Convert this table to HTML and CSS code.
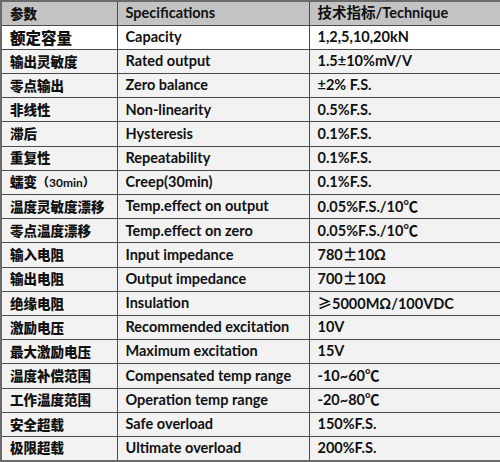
FILE: index.html
```html
<!DOCTYPE html>
<html lang="zh">
<head>
<meta charset="utf-8">
<title>参数 Specifications</title>
<link rel="stylesheet" href="styles.css">
</head>
<body>
<table class="spec">
  <colgroup><col class="c1"><col class="c2"><col class="c3"></colgroup>
  <thead>
    <tr class="head"><th>参数</th><th>Specifications</th><th>技术指标/Technique</th></tr>
  </thead>
  <tbody>
    <tr class="first"><td class="big">额定容量</td><td>Capacity</td><td>1,2,5,10,20kN</td></tr>
    <tr><td>输出灵敏度</td><td>Rated output</td><td>1.5±10%mV/V</td></tr>
    <tr><td>零点输出</td><td>Zero balance</td><td>±2% F.S.</td></tr>
    <tr><td>非线性</td><td>Non-linearity</td><td>0.5%F.S.</td></tr>
    <tr><td>滞后</td><td>Hysteresis</td><td>0.1%F.S.</td></tr>
    <tr><td>重复性</td><td>Repeatability</td><td>0.1%F.S.</td></tr>
    <tr><td>蠕变<span class="small">（<span class="lat">30min</span>）</span></td><td>Creep(30min)</td><td>0.1%F.S.</td></tr>
    <tr><td>温度灵敏度漂移</td><td>Temp.effect on output</td><td>0.05%F.S./10<span class="cjk">℃</span></td></tr>
    <tr><td>零点温度漂移</td><td>Temp.effect on zero</td><td>0.05%F.S./10<span class="cjk">℃</span></td></tr>
    <tr><td>输入电阻</td><td>Input impedance</td><td>780<span class="cjk">±</span>10Ω</td></tr>
    <tr><td>输出电阻</td><td>Output impedance</td><td>700<span class="cjk">±</span>10Ω</td></tr>
    <tr><td>绝缘电阻</td><td>Insulation</td><td><span class="cjk">≥</span>5000MΩ/100VDC</td></tr>
    <tr><td>激励电压</td><td>Recommended excitation</td><td>10V</td></tr>
    <tr><td>最大激励电压</td><td>Maximum excitation</td><td>15V</td></tr>
    <tr><td>温度补偿范围</td><td>Compensated temp range</td><td>-10~60<span class="cjk">℃</span></td></tr>
    <tr><td>工作温度范围</td><td>Operation temp range</td><td>-20~80<span class="cjk">℃</span></td></tr>
    <tr><td>安全超载</td><td>Safe overload</td><td>150%F.S.</td></tr>
    <tr><td>极限超载</td><td>Ultimate overload</td><td>200%F.S.</td></tr>
  </tbody>
</table>
</body>
</html>
```
FILE: styles.css
```css
html, body {
  margin: 0;
  padding: 0;
  background: #ffffff;
}
.spec {
  width: 500px;
  border-collapse: collapse;
  table-layout: fixed;
  border: 2px solid #6a6a6a;
  font-family: Lato, "Noto Sans CJK SC", sans-serif;
  font-weight: 700;
  font-size: 14.5px;
  color: #111111;
}
.c1 { width: 116px; }
.c2 { width: 192px; }
.c3 { width: 192px; }
.spec tr {
  height: 24.2px;
}
.spec th,
.spec td {
  border: 1px solid #4a4a4a;
  padding: 0 0 0 8px;
  text-align: left;
  vertical-align: middle;
  white-space: nowrap;
  overflow: hidden;
  line-height: 1;
}
.spec td:first-child,
.spec th:first-child {
  font-family: "Noto Sans CJK SC", sans-serif;
  font-weight: 900;
  font-size: 13.5px;
}
.spec td.big {
  font-size: 15.5px;
}
.head th {
  background: #c3c3c3;
}
.spec tbody tr { background: #f2f2f2; }
.spec tbody tr.first { background: #ffffff; }
.small {
  font-size: 12px;
}
.lat {
  font-family: Lato, sans-serif;
  font-weight: 700;
}
.cjk {
  font-family: "Noto Sans CJK SC", sans-serif;
}
```
